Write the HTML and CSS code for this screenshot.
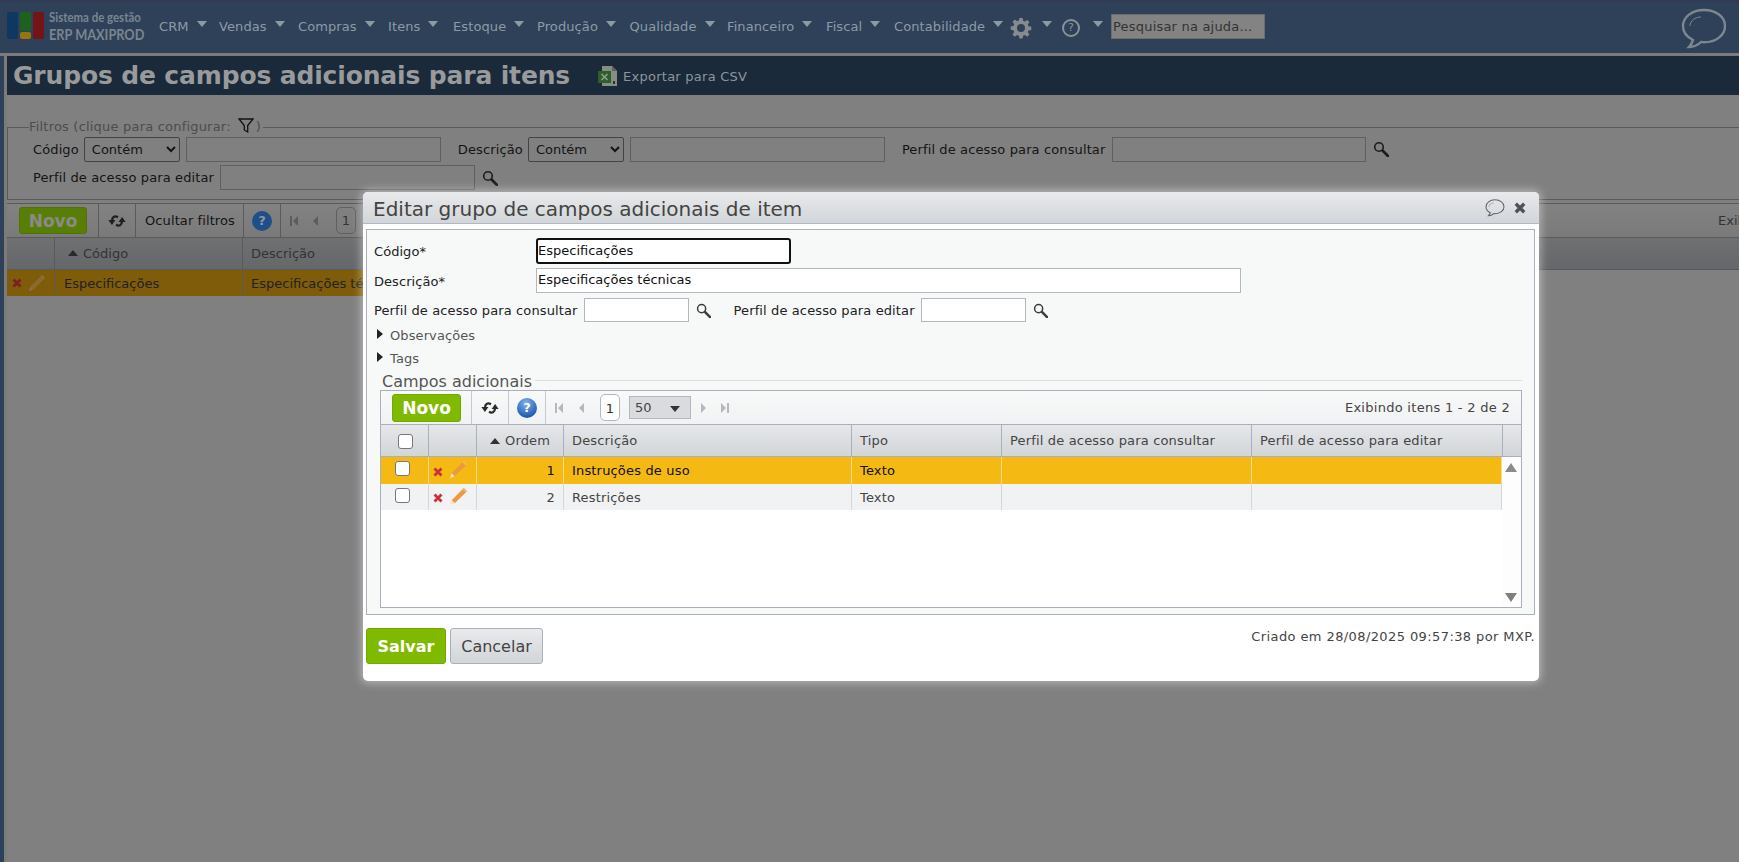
FILE: index.html
```html
<!DOCTYPE html>
<html lang="pt-BR">
<head>
<meta charset="utf-8">
<title>Grupos de campos adicionais para itens</title>
<link rel="stylesheet" href="styles.css">
</head>
<body>
<svg class="defs" width="0" height="0" aria-hidden="true">
  <defs>
    <symbol id="lens" viewBox="0 0 16 16"><circle cx="6" cy="6" r="4.3" fill="none" stroke="currentColor" stroke-width="1.6"/><path d="M9.5 9.5 15 15" stroke="currentColor" stroke-width="2.6" stroke-linecap="round"/></symbol>
    <symbol id="cross" viewBox="0 0 10 10"><path d="M1.5 1.5 8.5 8.5M8.5 1.5 1.5 8.5" stroke="currentColor" stroke-width="2.8"/></symbol>
    <symbol id="pencil" viewBox="0 0 18 18"><path d="M14 1 17 4 5.500 15.500 2.500 12.500Z" fill="currentColor"/><path d="M2.500 12.500 5.500 15.500 .8 17.200Z" class="pen-tip"/><path d="M14 1 17 4 15.700 5.300 12.700 2.300Z" class="pen-end"/></symbol>
    <symbol id="sync" viewBox="0 0 18 14"><path d="M10 3.200C7 1.500 4.200 2.600 4 6.500" fill="none" stroke="currentColor" stroke-width="2.300"/><path d="M.4 6h7L3.900 11Z" fill="currentColor"/><path d="M8 10.800c3 1.700 5.800.6 6-3.300" fill="none" stroke="currentColor" stroke-width="2.300"/><path d="M10.600 8h7L14.100 3Z" fill="currentColor"/></symbol>
    <symbol id="first" viewBox="0 0 8 12"><path d="M0 1h2v10H0ZM8 1v10L3 6Z" fill="currentColor"/></symbol>
    <symbol id="prev" viewBox="0 0 7 12"><path d="M6 1v10L1 6Z" fill="currentColor"/></symbol>
    <symbol id="next" viewBox="0 0 7 12"><path d="M1 1v10l5-5Z" fill="currentColor"/></symbol>
    <symbol id="last" viewBox="0 0 8 12"><path d="M0 1v10l5-5ZM6 1h2v10H6Z" fill="currentColor"/></symbol>
    <symbol id="bubble" viewBox="0 0 46 42"><path d="M23 2C11 2 2 9 2 18c0 6 4 11 10 14-1 3-2 5-4 7 5 0 9-2 12-5 1 0 2 .3 3 .3 12 0 21-7 21-16.300S35 2 23 2Z" fill="none" stroke="currentColor" stroke-width="2.400"/><path d="M9 18c0-5 5-9 11-9" fill="none" stroke="currentColor" stroke-width="1"/></symbol>
  </defs>
</svg>

<header class="nav">
  <div class="logo">
    <div class="logo-mark">
      <span class="lm lm-blue"></span>
      <span class="lm lm-mid"><i class="lm-green"></i><i class="lm-yellow"></i></span>
      <span class="lm lm-red"></span>
    </div>
    <div class="logo-text"><span class="logo-l1">Sistema de gestão</span><span class="logo-l2">ERP MAXIPROD</span></div>
  </div>
  <nav class="menu">
    <a class="mi mi-crm">CRM<b class="caret"></b></a>
    <a class="mi mi-ven">Vendas<b class="caret"></b></a>
    <a class="mi mi-com">Compras<b class="caret"></b></a>
    <a class="mi mi-ite">Itens<b class="caret"></b></a>
    <a class="mi mi-est">Estoque<b class="caret"></b></a>
    <a class="mi mi-pro">Produção<b class="caret"></b></a>
    <a class="mi mi-qua">Qualidade<b class="caret"></b></a>
    <a class="mi mi-fin">Financeiro<b class="caret"></b></a>
    <a class="mi mi-fis">Fiscal<b class="caret"></b></a>
    <a class="mi mi-con">Contabilidade<b class="caret"></b></a>
    <svg class="gear" viewBox="0 0 20 20"><path d="M8.400 0h3.200l.5 2.800 1.700.7 2.400-1.600 2.200 2.200-1.600 2.400.7 1.700 2.800.5v3.200l-2.800.5-.7 1.700 1.600 2.400-2.200 2.200-2.400-1.600-1.700.7-.5 2.800H8.400l-.5-2.800-1.700-.7-2.400 1.600-2.200-2.200 1.600-2.400-.7-1.700L-.3 11.600V8.400l2.800-.5.7-1.700L1.600 3.800l2.200-2.200 2.400 1.600 1.700-.7ZM10 6a4 4 0 1 0 0 8 4 4 0 0 0 0-8Z" fill="#868b90" fill-rule="evenodd"/></svg>
    <b class="caret caret-gear"></b>
    <span class="help-ring">?</span>
    <b class="caret caret-help"></b>
    <input class="nav-search" type="text" value="Pesquisar na ajuda...">
  </nav>
  <svg class="nav-bubble"><use href="#bubble"/></svg>
</header>

<main class="page">
  <div class="title-bar">
    <h1 class="title">Grupos de campos adicionais para itens</h1>
    <svg class="xls" viewBox="0 0 20 20"><path d="M4 0h10l5 5v15H4Z" fill="#878c84"/><path d="M14 0v5h5Z" fill="#5f635c"/><rect x="0" y="5" width="13" height="12" fill="#2d5e2c"/><path d="M3.500 8 9.500 14M9.500 8 3.500 14" stroke="#8ea08c" stroke-width="1.600"/><path d="M15 15h2v3h-2Z" fill="#2c3030"/></svg>
    <span class="export">Exportar para CSV</span>
  </div>

  <fieldset class="filters">
    <legend class="filters-legend"><span>Filtros (clique para configurar:</span><svg class="funnel" viewBox="0 0 16 15"><path d="M1 1h14L9.700 7.500V14L6.300 12V7.500Z" fill="none" stroke="#111" stroke-width="1.300"/></svg><span>)</span></legend>
    <div class="f-row f-row-1">
      <label class="f-label">Código</label>
      <select class="f-select"><option>Contém</option></select>
      <input class="f-input" type="text">
      <label class="f-label f-l-desc">Descrição</label>
      <select class="f-select"><option>Contém</option></select>
      <input class="f-input f-input-d" type="text">
      <label class="f-label f-l-perfil">Perfil de acesso para consultar</label>
      <input class="f-input f-input-p" type="text">
      <svg class="f-lens"><use href="#lens"/></svg>
    </div>
    <div class="f-row f-row-2">
      <label class="f-label">Perfil de acesso para editar</label>
      <input class="f-input f-input-e" type="text">
      <svg class="f-lens"><use href="#lens"/></svg>
    </div>
  </fieldset>

  <div class="bg-toolbar">
    <button class="bg-novo">Novo</button>
    <span class="bg-sep"></span>
    <svg class="bg-sync"><use href="#sync"/></svg>
    <span class="bg-sep"></span>
    <span class="bg-hide">Ocultar filtros</span>
    <span class="bg-sep"></span>
    <span class="bg-help">?</span>
    <span class="bg-sep"></span>
    <svg class="bg-first"><use href="#first"/></svg>
    <svg class="bg-prev"><use href="#prev"/></svg>
    <span class="bg-page">1</span>
    <span class="bg-info">Exibindo itens 1 - 1 de 1</span>
  </div>
  <div class="bg-head">
    <div class="bg-c0"></div>
    <div class="bg-c1"><i class="sort sort-dim"></i>Código</div>
    <div class="bg-c2">Descrição</div>
  </div>
  <div class="bg-rowline">
    <div class="bg-c0"><svg class="bg-x"><use href="#cross"/></svg><svg class="bg-pen"><use href="#pencil"/></svg></div>
    <div class="bg-c1">Especificações</div>
    <div class="bg-c2">Especificações técnicas</div>
  </div>
</main>

<section class="modal">
  <div class="m-title">
    <h2 class="m-heading">Editar grupo de campos adicionais de item</h2>
    <svg class="m-bubble"><use href="#bubble"/></svg>
    <svg class="m-close"><use href="#cross"/></svg>
  </div>
  <div class="m-panel">
    <div class="m-row m-row-cod">
      <label class="m-label">Código*</label>
      <input class="m-input m-input-cod" type="text" value="Especificações">
    </div>
    <div class="m-row m-row-desc">
      <label class="m-label">Descrição*</label>
      <input class="m-input m-input-desc" type="text" value="Especificações técnicas">
    </div>
    <div class="m-row m-row-perf">
      <label class="m-plabel">Perfil de acesso para consultar</label>
      <input class="m-input m-input-perf" type="text">
      <svg class="m-lens"><use href="#lens"/></svg>
      <label class="m-plabel m-plabel-2">Perfil de acesso para editar</label>
      <input class="m-input m-input-perf" type="text">
      <svg class="m-lens"><use href="#lens"/></svg>
    </div>
    <div class="m-exp m-exp-obs"><i class="tri"></i>Observações</div>
    <div class="m-exp m-exp-tags"><i class="tri"></i>Tags</div>
    <div class="m-legend"><span>Campos adicionais</span></div>
    <div class="grid">
      <div class="g-toolbar">
        <button class="g-novo">Novo</button>
        <span class="g-sep g-sep-1"></span>
        <svg class="g-sync"><use href="#sync"/></svg>
        <span class="g-sep g-sep-2"></span>
        <span class="g-help">?</span>
        <span class="g-sep g-sep-3"></span>
        <svg class="g-pg g-first"><use href="#first"/></svg>
        <svg class="g-pg g-prev"><use href="#prev"/></svg>
        <span class="g-page">1</span>
        <span class="g-size">50<i class="g-size-caret"></i></span>
        <svg class="g-pg g-next"><use href="#next"/></svg>
        <svg class="g-pg g-last"><use href="#last"/></svg>
        <span class="g-info">Exibindo itens 1 - 2 de 2</span>
      </div>
      <div class="g-head">
        <div class="g-cell g-center"><input class="g-check" type="checkbox"></div>
        <div class="g-cell"></div>
        <div class="g-cell g-ordem"><i class="sort"></i>Ordem</div>
        <div class="g-cell">Descrição</div>
        <div class="g-cell">Tipo</div>
        <div class="g-cell">Perfil de acesso para consultar</div>
        <div class="g-cell">Perfil de acesso para editar</div>
        <div class="g-cell g-cell-last"></div>
      </div>
      <div class="g-body">
        <div class="g-rows">
          <div class="g-row g-row-sel">
            <div class="g-cell g-chk"><input class="g-check" type="checkbox"></div>
            <div class="g-cell g-act"><svg class="g-x"><use href="#cross"/></svg><svg class="g-pen"><use href="#pencil"/></svg></div>
            <div class="g-cell g-num">1</div>
            <div class="g-cell">Instruções de uso</div>
            <div class="g-cell">Texto</div>
            <div class="g-cell"></div>
            <div class="g-cell"></div>
          </div>
          <div class="g-row g-row-alt">
            <div class="g-cell g-chk"><input class="g-check" type="checkbox"></div>
            <div class="g-cell g-act"><svg class="g-x"><use href="#cross"/></svg><svg class="g-pen"><use href="#pencil"/></svg></div>
            <div class="g-cell g-num">2</div>
            <div class="g-cell">Restrições</div>
            <div class="g-cell">Texto</div>
            <div class="g-cell"></div>
            <div class="g-cell"></div>
          </div>
        </div>
        <div class="g-scroll"><i class="sb-up"></i><i class="sb-down"></i></div>
      </div>
    </div>
  </div>
  <div class="m-foot">
    <button class="btn-save">Salvar</button>
    <button class="btn-cancel">Cancelar</button>
    <span class="m-created">Criado em 28/08/2025 09:57:38 por MXP.</span>
  </div>
</section>
</body>
</html>
```
FILE: styles.css
```css
* { box-sizing: border-box; }
html, body { margin: 0; height: 100%; }
body {
  font-family: "DejaVu Sans", Verdana, sans-serif;
  font-size: 13px;
  background: #2e4159;
  color: #111;
  overflow: hidden;
  position: relative;
}
.defs { position: absolute; }
input, select, button { font-family: inherit; font-size: 13px; }
.pen-tip { fill: var(--tip, #f6e4c8); }
.pen-end { fill: var(--end, #f5b56c); }

/* top navigation */
.nav {
  height: 56px;
  display: flex;
  background: #2e4159;
  border-top: 2px solid #333b55;
  border-bottom: 3px solid #7b7b7b;
  position: relative;
}
.logo { display: flex; width: 159px; padding: 10px 0 0 7px; flex: none; }
.logo-mark { display: flex; gap: 2px; height: 27px; width: 37px; }
.lm { width: 11px; border-radius: 2px; display: block; }
.lm-blue { background: #0e3862; }
.lm-red { background: #731419; }
.lm-mid { display: flex; flex-direction: column; gap: 1px; }
.lm-green { height: 19px; background: #1d611f; border-radius: 2px; display: block; }
.lm-yellow { flex: 1; background: #96740f; border-radius: 2px; display: block; }
.logo-text { margin-left: 5px; width: 100px; display: flex; flex-direction: column; color: #7a8590; font-family: Lato, "Liberation Sans", sans-serif; font-weight: 700; white-space: nowrap; }
.logo-l1 { display: block; font-size: 13px; line-height: 14px; margin-top: -2px; transform: scaleX(.88); transform-origin: left; }
.logo-l2 { display: block; font-size: 15px; line-height: 18px; margin-top: 1px; transform: scaleX(.85); transform-origin: left; }
.menu { display: flex; align-items: center; height: 51px; margin-top: -1px; color: #8d9aa6; white-space: nowrap; }
.mi { display: flex; align-items: center; letter-spacing: .1px; }
.caret { display: block; width: 0; height: 0; border: 5.5px solid transparent; border-top: 6px solid #8d9aa6; border-bottom: 0; margin: -5px 0 0 8px; }
.mi-crm { width: 60px; }
.mi-ven { width: 79px; }
.mi-com { width: 90px; }
.mi-ite { width: 65px; }
.mi-est { width: 84px; }
.mi-pro { width: 92.500px; }
.mi-qua { width: 97.500px; }
.mi-fin { width: 99px; }
.mi-fis { width: 68px; }
.mi-con { width: 117px; }
.gear { width: 20px; height: 20px; margin-top: 2px; overflow: visible; }
.caret-gear { margin: -5px 0 0 11px; }
.help-ring { width: 18px; height: 18px; border: 2px solid #8b9198; border-radius: 50%; margin: 3px 0 0 10px; font-size: 11px; line-height: 14px; text-align: center; color: #8b9198; }
.caret-help { margin: -5px 0 0 13px; }
.nav-search { width: 154px; height: 25px; margin: 0 0 0 8px; padding: 0 1px; background: #838383; border: 1px solid #6d6d6d; color: #333; letter-spacing: .2px; }
.nav-bubble { width: 46px; height: 42px; color: #7d8790; position: absolute; right: 12px; top: 6px; }

/* dimmed page behind the dialog */
.page { margin-left: 4px; border-left: 3px solid #7b7b7b; height: 806px; background: #808080; }
.title-bar { height: 39px; background: #1a2a3a; display: flex; align-items: center; padding-left: 6px; }
.title { margin: 0; font-size: 25px; letter-spacing: -.15px; line-height: 36px; font-weight: 700; color: #989a9c; white-space: nowrap; }
.xls { width: 20px; height: 20px; margin-left: 28px; flex: none; }
.export { color: #8c959d; margin: 2px 0 0 5px; letter-spacing: .25px; }
.filters { margin: 24px 0 0; padding: 0 0 0 25px; height: 81px; border: 0; border-top: 1px solid #5a5a5a; border-left: 1px solid #5a5a5a; border-bottom: 1px solid #5a5a5a; min-width: 0; position: relative; }
.filters-legend { display: flex; align-items: center; margin-left: -4px; padding: 0 2px 0 0; color: #4c4c4c; letter-spacing: .2px; white-space: nowrap; height: 16px; line-height: 16px; }
.funnel { width: 16px; height: 15px; margin: -4px 2px 0 7px; flex: none; }
.f-row { display: flex; align-items: center; }
.f-row-1 { margin-top: 1px; height: 26px; }
.f-row-2 { margin-top: 3px; height: 25px; }
.f-label { color: #141414; white-space: nowrap; letter-spacing: .12px; }
.f-select { width: 96px; height: 25px; margin-left: 5px; background: #808080; border: 1px solid #444; border-radius: 2px; color: #141414; padding: 0 0 0 3px; }
.f-input { width: 255px; height: 25px; margin-left: 6px; background: #808080; border: 1px solid #5f5f5f; }
.f-l-desc { margin-left: 17px; }
.f-l-perfil { margin-left: 17px; }
.f-input-p { width: 254px; margin-left: 7px; }
.f-lens { width: 16px; height: 16px; margin-left: 7px; color: #1c1c1c; }

.bg-toolbar { height: 34px; margin-top: 3px; border-top: 1px solid #5a5a5a; display: flex; align-items: center; padding-left: 12px; background: linear-gradient(#828282, #7a7a7a); position: relative; }
.bg-novo { width: 68px; height: 27px; background: #597e05; border: 1px solid #517205; border-radius: 3px; color: #8a8a8a; font-weight: 700; font-size: 17px; padding: 0; }
.bg-sep { width: 1px; height: 33px; background: #5a5a5a; }
.bg-novo + .bg-sep { margin-left: 11px; }
.bg-sync { width: 18px; height: 14px; margin: 0 9px; color: #1f1f1f; }
.bg-hide { margin: 0 8px 0 9px; color: #141414; white-space: nowrap; letter-spacing: .1px; }
.bg-help { width: 20px; height: 20px; border-radius: 50%; background: #1f4f89; color: #8a98a8; font-weight: 700; text-align: center; line-height: 20px; margin: 0 8px; }
.bg-first { width: 8px; height: 12px; margin-left: 9px; color: #5c5c5c; }
.bg-prev { width: 7px; height: 12px; margin-left: 14px; color: #5c5c5c; }
.bg-page { width: 20px; height: 27px; margin-left: 17px; border: 1px solid #5f5f5f; border-radius: 5px; text-align: center; line-height: 25px; color: #333; }
.bg-info { position: absolute; left: 1711px; color: #333; white-space: nowrap; }
.bg-head, .bg-rowline { display: flex; }
.bg-head { height: 33px; background: linear-gradient(#6f7072, #65676a); border-top: 1px solid #5a5a5a; border-bottom: 1px solid #5a5a5a; color: #333; line-height: 31px; }
.bg-rowline { width: 1200px; height: 26px; background: #7f5c0a; color: #222; line-height: 28px; }
.bg-c0 { width: 48px; border-right: 1px solid #5a5a5a; display: flex; align-items: center; padding-left: 5px; }
.bg-c1 { width: 188px; border-right: 1px solid #5a5a5a; padding-left: 9px; }
.bg-head .bg-c1 { padding-left: 13px; }
.bg-c2 { flex: 1; padding-left: 8px; }
.bg-x { width: 10px; height: 10px; color: #7f1f1f; flex: none; }
.bg-pen { width: 18px; height: 18px; margin-left: 6px; color: #8b6a2c; flex: none; --tip: #86744f; --end: #8f6f36; }
.sort { display: inline-block; width: 0; height: 0; border: 5.500px solid transparent; border-bottom: 6px solid #333; border-top: 0; margin-right: 5px; vertical-align: 2px; }
.sort-dim { border-bottom-color: #2a2a2a; }

/* dialog */
.modal {
  position: absolute;
  left: 363px;
  top: 192px;
  width: 1176px;
  height: 489px;
  background: #fff;
  border-radius: 5px;
  box-shadow: 0 0 8px 2px rgba(255, 255, 255, .42);
}
.m-title { height: 32px; background: linear-gradient(#e8eaec, #d2d5d9); border-radius: 5px 5px 0 0; border-bottom: 1px solid #b2b8c2; display: flex; align-items: center; padding: 0 13px 0 10px; }
.m-heading { margin: 0; padding-top: 2px; flex: 1; font-size: 20px; font-weight: 400; color: #444; white-space: nowrap; line-height: 30px; }
.m-bubble { width: 20px; height: 18px; color: #5f6368; margin-right: 9px; }
.m-close { width: 12px; height: 12px; color: #4c5057; }
.m-panel { margin: 5px 4px 0 3px; height: 386px; background: #f7f9f9; border: 1px solid #aab0bb; position: relative; padding-left: 7px; }
.m-row { display: flex; align-items: center; color: #222; }
.m-row-cod { margin-top: 8px; height: 26px; }
.m-row-desc { margin-top: 4px; height: 25px; }
.m-row-desc .m-label { padding-top: 2px; }
.m-row-perf { margin-top: 5px; height: 24px; }
.m-label { width: 162px; flex: none; letter-spacing: .05px; }
.m-plabel { white-space: nowrap; letter-spacing: .12px; }
.m-plabel-2 { margin-left: 23px; }
.m-input { height: 100%; background: #fff; border: 1px solid #b3b8c0; padding: 0 1px 2px; color: #111; margin: 0; }
.m-input-cod { width: 255px; border: 2px solid #111; border-radius: 3px; padding: 0 0 2px; }
.m-input-desc { width: 705px; }
.m-input-perf { width: 105px; margin-left: 6px; }
.m-lens { width: 15px; height: 15px; margin-left: 7px; color: #3c3c3c; }
.m-exp { display: flex; align-items: center; color: #555; letter-spacing: .1px; }
.tri { display: block; width: 0; height: 0; border: 5px solid transparent; border-left: 6px solid #222; border-right: 0; margin: -4px 7px 0 3px; }
.m-exp-obs { height: 17px; margin-top: 5px; }
.m-exp-tags { height: 17px; margin-top: 6px; }
.m-legend { margin: 5px 12px 0 8px; height: 19px; position: relative; display: flex; align-items: center; font-size: 16px; color: #555; }
.m-legend::after { content: ""; flex: 1; height: 1px; background: #dcdee0; margin-left: 3px; margin-top: -2px; }
.m-legend span { margin-top: -1px; }
.grid { margin: -1px 12px 0 6px; height: 218px; border: 1px solid #aab0bb; background: #fff; position: relative; }
.g-toolbar { height: 33px; display: flex; align-items: center; background: linear-gradient(#f8f9f9, #f0f2f3); padding-left: 11px; position: relative; }
.g-novo { width: 69px; height: 28px; background: #7fba00; border: 1px solid #73a800; border-radius: 3px; color: #fff; font-weight: 700; font-size: 17px; padding: 0; }
.g-sep { width: 1px; height: 33px; background: #c6c9cf; }
.g-sep-1 { margin-left: 10px; }
.g-sync { width: 18px; height: 14px; margin: 0 9px 0 9px; color: #2a2a2a; }
.g-help { width: 20px; height: 20px; border-radius: 50%; background: radial-gradient(circle at 45% 25%, #7eb2ea, #1f5cb0 75%); color: #fff; font-weight: 700; line-height: 20px; text-align: center; margin: 0 8px 0 8px; }
.g-pg { height: 12px; color: #b5b9bf; flex: none; }
.g-first { width: 8px; margin-left: 9px; }
.g-prev { width: 7px; margin-left: 15px; }
.g-page { width: 20px; height: 27px; margin-left: 15px; border: 1px solid #b3b8c0; border-radius: 5px; background: #fff; text-align: center; line-height: 27px; color: #333; }
.g-size { width: 62px; height: 23px; margin-left: 9px; background: #d9dbde; border: 1px solid #b3b8c0; display: flex; align-items: center; justify-content: space-between; padding: 0 10px 0 5px; color: #444; }
.g-size-caret { width: 0; height: 0; border: 5.500px solid transparent; border-top: 6px solid #333; border-bottom: 0; margin-top: 3px; }
.g-next { width: 7px; margin-left: 9px; }
.g-last { width: 8px; margin-left: 14px; }
.g-info { margin-left: auto; padding-right: 11px; color: #444; white-space: nowrap; letter-spacing: .28px; }
.g-head, .g-row { display: grid; grid-template-columns: 48px 48px 87px 288px 150px 250px 250px; }
.g-head { grid-template-columns: 48px 48px 87px 288px 150px 250px 251px 1fr; height: 33px; background: linear-gradient(#e5e7e9, #d2d5d9); border-top: 1px solid #aab0bb; border-bottom: 1px solid #aab0bb; color: #444; }
.g-cell { display: flex; align-items: center; padding-left: 8px; border-right: 1px solid #aab0bb; white-space: nowrap; letter-spacing: .17px; min-width: 0; }
.g-row .g-cell { border-right-color: #d4d6da; }
.g-cell-last { border-right: 0; }
.g-center { justify-content: center; padding: 1px 0 0 2px; }
.g-ordem { padding-left: 13px; }
.g-body { display: flex; height: 150px; }
.g-rows { width: 1121px; flex: none; }
.g-row { height: 26px; color: #444; }
.g-row-sel { height: 27px; background: #f5b914; color: #111; }
.g-row-alt { background: #f1f2f4; }
.g-row-sel .g-cell { border-right-color: #f9dd8a; }
.g-num { justify-content: flex-end; padding-right: 8px; }
.g-chk { padding-left: 14px; }
.g-chk .g-check { margin-top: -4px; }
.g-act { padding-left: 4px; }
.g-check { appearance: none; width: 15px; height: 15px; margin: 0; background: #fff; border: 1px solid #777; border-radius: 3px; }
.g-x { width: 10px; height: 10px; color: #c8303a; flex: none; margin-top: 2px; }
.g-pen { width: 19px; height: 19px; margin: -2px 0 0 6px; color: #ee9a3c; flex: none; }
.g-scroll { flex: 1; position: relative; background: #fdfdfd; }
.sb-up, .sb-down { position: absolute; left: 3px; width: 0; height: 0; border: 6.500px solid transparent; }
.sb-up { top: 6px; border-bottom: 9px solid #8a8a8a; border-top: 0; }
.sb-down { bottom: 5px; border-top: 9px solid #7f7f7f; border-bottom: 0; }
.m-foot { display: flex; padding: 13px 4px 0 3px; align-items: flex-start; }
.btn-save { width: 80px; height: 36px; background: #7fba00; border: 1px solid #73a800; border-radius: 3px; color: #fff; font-weight: 700; font-size: 16px; padding: 0; }
.btn-cancel { width: 93px; height: 36px; margin-left: 4px; background: linear-gradient(#e8eaec, #d2d5d9); border: 1px solid #aab0bb; border-radius: 3px; color: #444; font-size: 16px; padding: 0; }
.m-created { margin-left: auto; color: #444; letter-spacing: .4px; line-height: 18px; }
```
